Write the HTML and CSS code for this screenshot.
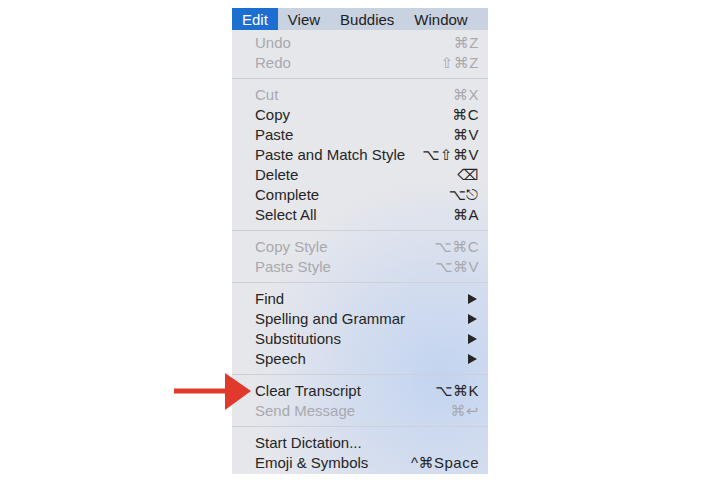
FILE: index.html
```html
<!DOCTYPE html>
<html lang="en">
<head>
    <meta charset="UTF-8">
    <meta name="viewport" content="width=device-width, initial-scale=1.0">
    <title>Edit menu</title>
    <link rel="stylesheet" href="styles.css">
</head>
<body>

<div class="page">
    <div class="menu">
        <svg class="pointer" width="80" height="40" viewBox="0 0 80 40">
            <rect x="0" y="15.5" width="56" height="5" fill="#e2392d"/>
            <polygon points="51,0 77,18 51,37" fill="#e2392d"/>
        </svg>

        <div class="menubar">
            <span class="title active">Edit</span>
            <span class="title">View</span>
            <span class="title">Buddies</span>
            <span class="title">Window</span>
        </div>

        <div class="dropdown">
            <div class="item disabled"><span>Undo</span><span class="key">⌘Z</span></div>
            <div class="item disabled"><span>Redo</span><span class="key">⇧⌘Z</span></div>
            <div class="sep"></div>
            <div class="item disabled"><span>Cut</span><span class="key">⌘X</span></div>
            <div class="item"><span>Copy</span><span class="key">⌘C</span></div>
            <div class="item"><span>Paste</span><span class="key">⌘V</span></div>
            <div class="item"><span>Paste and Match Style</span><span class="key">⌥⇧⌘V</span></div>
            <div class="item"><span>Delete</span><span class="key">⌫</span></div>
            <div class="item"><span>Complete</span><span class="key">⌥⎋</span></div>
            <div class="item"><span>Select All</span><span class="key">⌘A</span></div>
            <div class="sep"></div>
            <div class="item disabled"><span>Copy Style</span><span class="key">⌥⌘C</span></div>
            <div class="item disabled"><span>Paste Style</span><span class="key">⌥⌘V</span></div>
            <div class="sep"></div>
            <div class="item"><span>Find</span><span class="submenu"></span></div>
            <div class="item"><span>Spelling and Grammar</span><span class="submenu"></span></div>
            <div class="item"><span>Substitutions</span><span class="submenu"></span></div>
            <div class="item"><span>Speech</span><span class="submenu"></span></div>
            <div class="sep"></div>
            <div class="item"><span>Clear Transcript</span><span class="key">⌥⌘K</span></div>
            <div class="item disabled"><span>Send Message</span><span class="key">⌘↩</span></div>
            <div class="sep"></div>
            <div class="item"><span>Start Dictation...</span></div>
            <div class="item"><span>Emoji &amp; Symbols</span><span class="key">^⌘Space</span></div>
        </div>
    </div>
</div>

</body>
</html>
```

FILE: styles.css
```css
body {
    font-family: "Liberation Sans", Arial, "DejaVu Sans", sans-serif;
    background-color: #fff;
    margin: 0;
    padding: 0;
}
.page {
    display: flex;
    justify-content: center;
    padding-top: 8px;
}
.menu {
    position: relative;
    width: 256px;
}
.pointer {
    position: absolute;
    left: -58px;
    top: 365px;
}
.menubar {
    display: flex;
    height: 22px;
    background-color: #c8d2e0;
    font-size: 15px;
    color: #1e1e1e;
}
.menubar .title {
    padding: 0 10px;
    line-height: 23px;
}
.menubar .title.active {
    background-color: #1c6fd1;
    color: #fff;
}
.dropdown {
    padding: 3px 0 1px;
    font-size: 15px;
    color: #252525;
    background: radial-gradient(ellipse 75% 45% at 82% 78%, #c3d4f0 0%, #d2dcef 45%, #e6e7eb 100%);
    background-color: #e6e7eb;
}
.item {
    display: flex;
    justify-content: space-between;
    align-items: center;
    height: 20px;
    line-height: 22px;
    padding: 0 9px 0 23px;
}
.item.disabled {
    color: #a8a9ae;
}
.key {
    letter-spacing: 0.5px;
    font-family: "Liberation Sans", "DejaVu Sans", sans-serif;
}
.submenu {
    width: 0;
    height: 0;
    margin-right: 2px;
    border-left: 9px solid #262626;
    border-top: 5px solid transparent;
    border-bottom: 5px solid transparent;
}
.sep {
    height: 1px;
    margin: 5px 0 6px;
    background-color: #cdd0d6;
}
```
